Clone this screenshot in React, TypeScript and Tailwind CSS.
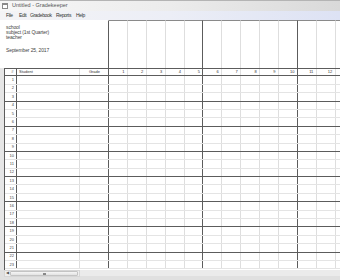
import React from "react";

const COLS = Array.from({ length: 13 }, (_, i) => i);
const ROWS = Array.from({ length: 23 }, (_, i) => i + 1);

function colBorder(i: number) {
  return i === 4 || i === 9 ? "border-[#5c5c5c]" : "border-[#dedede]";
}

export default function App() {
  return (
    <div className="w-[340px] h-[280px] overflow-hidden bg-[#e4e4e4] flex flex-col font-['Liberation_Sans',Arial,sans-serif] text-[#333] antialiased">
      {/* Title bar */}
      <div className="h-[11px] shrink-0 flex items-center gap-[4px] pl-[2px] border-t border-[#b4b4b4] bg-gradient-to-r from-[#f7f7f7] via-[#ececec] to-[#d9d9d9]">
        <div className="w-[6px] h-[6px] border border-[#8a8a8a] bg-white flex flex-col">
          <div className="h-[1px] bg-[#8a8a8a]" />
        </div>
        <span className="text-[5.5px] leading-none text-[#555]">Untitled - Gradekeeper</span>
      </div>
      {/* Menu bar */}
      <div className="h-[9px] shrink-0 flex items-center pl-[6px] text-[5px] tracking-[-0.35px] leading-none text-[#333] bg-gradient-to-r from-[#f4f4f6] via-[#eceef6] to-[#dde2f4]">
        <span className="w-[13px]">File</span>
        <span className="w-[11px]">Edit</span>
        <span className="w-[26px]">Gradebook</span>
        <span className="w-[20px]">Reports</span>
        <span>Help</span>
      </div>
      {/* Header info */}
      <div className="h-[48px] shrink-0 flex bg-white">
        <div className="w-[109px] shrink-0 border-r border-t border-r-[#5c5c5c] border-t-white pl-[6px] pt-[4px] text-[5px] tracking-[-0.12px] leading-[5px] text-[#444]">
          <div>school</div>
          <div>subject (1st Quarter)</div>
          <div>teacher</div>
          <div className="mt-[8px]">September 25, 2017</div>
        </div>
        {COLS.map((i) => (
          <div key={i} className={`w-[18.9px] shrink-0 border-r border-t border-t-[#8a8a8a] ${colBorder(i)}`} />
        ))}
      </div>
      {/* Grid */}
      <div className="flex flex-1 min-h-0">
        <div className="w-[4px] shrink-0 bg-[#e6e6e6]" />
        <div className="flex flex-col flex-1 border-l border-[#5c5c5c] bg-white">
          <div className="h-[8.4px] shrink-0 flex border-y border-[#5c5c5c] text-[4px] leading-none text-[#333]">
            <div className="w-[12px] shrink-0 border-r border-[#5c5c5c] flex items-center justify-end pr-[2.5px]">#</div>
            <div className="w-[63px] shrink-0 border-r border-[#dedede] flex items-center pl-[2px]">Student</div>
            <div className="w-[29px] shrink-0 border-r border-[#5c5c5c] flex items-center justify-end pr-[8px]">Grade</div>
            {COLS.map((i) => (
              <div key={i} className={`w-[18.9px] shrink-0 border-r ${colBorder(i)} flex items-center justify-end pr-[2.5px]`}>
                {i < 12 ? i + 1 : ""}
              </div>
            ))}
          </div>
          {ROWS.map((n) => (
            <div
              key={n}
              className={`h-[8.4px] shrink-0 flex border-b text-[4px] leading-none ${n % 3 === 0 ? "border-[#5c5c5c]" : "border-[#e4e4e4]"}`}
            >
              <div className="w-[12px] shrink-0 border-r border-[#5c5c5c] flex items-center justify-end pr-[2px] text-[#444]">{n}</div>
              <div className="w-[63px] shrink-0 border-r border-[#dedede]" />
              <div className="w-[29px] shrink-0 border-r border-[#5c5c5c]" />
              {COLS.map((i) => (
                <div key={i} className={`w-[18.9px] shrink-0 border-r ${colBorder(i)}`} />
              ))}
            </div>
          ))}
        </div>
      </div>
      {/* Scrollbar */}
      <div className="h-[10px] shrink-0 flex bg-[#e0e0e0]">
        <div className="w-[4px] shrink-0" />
        <div className="w-[76px] h-[7px] shrink-0 flex items-center bg-[#eeeeee] border border-[#d6d6d6]">
          <div className="w-[5px] flex items-center justify-center text-[3.5px] leading-none text-[#555]">◀</div>
          <div className="flex-1 h-[5px] mr-[1px] rounded-[1px] border border-[#c4c4c4] bg-gradient-to-b from-[#f6f6f6] to-[#e2e2e2] flex items-center justify-center gap-[0.5px]">
            <div className="w-[0.6px] h-[2px] bg-[#888]" />
            <div className="w-[0.6px] h-[2px] bg-[#888]" />
            <div className="w-[0.6px] h-[2px] bg-[#888]" />
          </div>
        </div>
        <div className="flex-1 h-[6px] bg-[#ebebeb]" />
      </div>
    </div>
  );
}
